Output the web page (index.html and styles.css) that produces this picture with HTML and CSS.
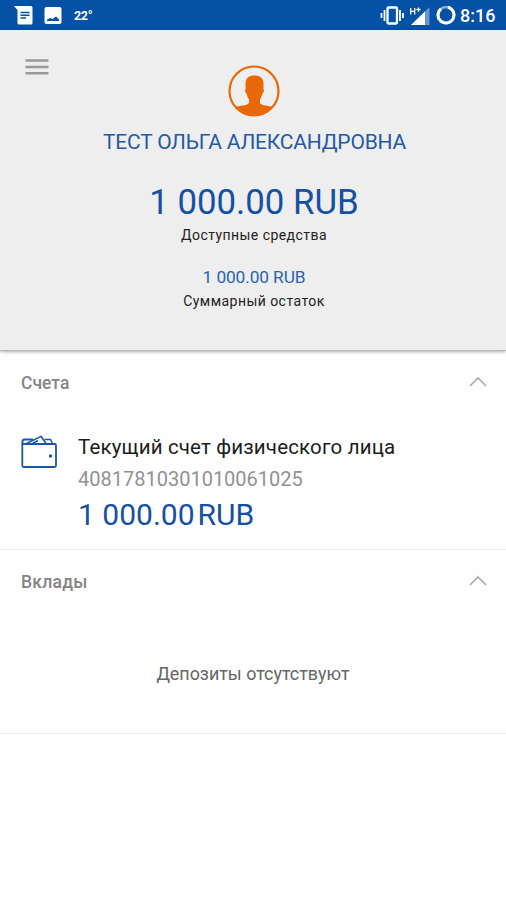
FILE: index.html
```
<!DOCTYPE html>
<html lang="ru">
<head>
<meta charset="utf-8">
<title>Счета</title>
<link rel="stylesheet" href="styles.css">
</head>
<body>
<div class="status">
  <div class="status-left">
    <svg width="64" height="30" viewBox="0 0 64 30">
      <path fill="#fff" d="M14 6H31a1.500 1.500 0 0 1 1.500 1.500V23a1.500 1.500 0 0 1-1.500 1.500H19a1.500 1.500 0 0 1-1.500-1.500V10Z"/>
      <path d="M20.500 12.500H29.500M20.500 15.200H29.500M20.500 18H26" stroke="#0451a5" stroke-width="1.500"/>
      <rect x="44.500" y="7" width="17" height="17" rx="2" fill="#fff"/>
      <path fill="#0451a5" d="M47 21V19.500L50.500 18L52.500 19L56 16.500L59 19.500V21Z"/>
    </svg>
    <span class="temp">22°</span>
  </div>
  <div class="status-right">
    <svg width="78" height="30" viewBox="380 0 78 30">
      <rect x="387.500" y="7.500" width="9.500" height="16" rx="1" fill="none" stroke="#fff" stroke-width="2.300"/>
      <path d="M384.500 10V21M381.500 13V18M400 10V21M403 13V18" stroke="#fff" stroke-width="1.800"/>
      <path fill="#6795cc" d="M429.500 7V25H411Z"/>
      <path fill="#fff" d="M425 11.500V25H411Z"/>
      <path d="M410.700 8V14.500M414.700 8V14.500M410.700 11.300H414.700M416.500 9.500H420.500M418.500 7.500V11.500" stroke="#fff" stroke-width="1.300"/>
      <circle cx="446" cy="15" r="8" fill="none" stroke="#8bafd8" stroke-width="2.500"/>
      <path d="M448 7.300A8 8 0 1 1 441 8.800" fill="none" stroke="#fff" stroke-width="3"/>
    </svg>
    <span class="clock">8:16</span>
  </div>
</div>
<header class="summary">
  <div class="topbar">
    <svg class="menu" width="24" height="18" viewBox="0 0 24 18"><path d="M.5 2.500H23.500M.5 9H23.500M.5 15.200H23.500" stroke="#999" stroke-width="2.500"/></svg>
    <svg class="avatar" width="52" height="52" viewBox="0 0 52 52">
      <circle cx="26" cy="26" r="24.500" fill="none" stroke="#e96807" stroke-width="2.200"/>
      <path fill="#e96807" d="M26.500 10.500C32 10.500 35.500 13 35.500 18.500V24C36.500 25.500 35.500 28 34.300 29C33.700 31.500 33 33 32 34.500V38C34.500 41 40 40.500 45.200 42A25 25 0 0 1 7 42C12 40.500 18.500 41 21 38V34.500C20 33 19.300 31.500 18.700 29C17.300 28 16.500 25.500 17.500 24V18.500C17.500 13 21 10.500 26.500 10.500Z"/>
    </svg>
  </div>
  <div class="name">ТЕСТ ОЛЬГА АЛЕКСАНДРОВНА</div>
  <div class="available">1 000.00 RUB</div>
  <div class="caption">Доступные средства</div>
  <div class="total">1 000.00 RUB</div>
  <div class="caption caption-total">Суммарный остаток</div>
</header>
<main>
  <section class="accounts">
    <div class="section-head">
      <h2>Счета</h2>
      <svg width="18" height="12" viewBox="0 0 18 12"><path d="M1 10L9 2L17 10" fill="none" stroke="#aaa" stroke-width="1.600"/></svg>
    </div>
    <div class="account">
      <svg class="wallet" width="38" height="36" viewBox="20 435 38 36" fill="none" stroke="#1c56a6" stroke-width="1.800" stroke-linejoin="round">
        <path d="M22.300 443V466.500Q22.300 468 24 468H54.500Q56 468 56 466.500V446.500Q56 445 54.500 445H24.500Q22.300 445 22.300 443Q22.300 440.500 25 440.500H33"/>
        <path d="M26.500 444.500L41 437.300L46 444.500M32.500 444.500L38 441.500M44.500 440.500H50.500L52.500 444.500" stroke-width="1.500"/>
        <circle cx="50.500" cy="457" r="1.700" fill="#1c56a6" stroke="none"/>
      </svg>
      <div class="details">
        <div class="title">Текущий счет физического лица</div>
        <div class="number">40817810301010061025</div>
        <div class="amount"><span>1 000.00</span><span>RUB</span></div>
      </div>
    </div>
  </section>
  <section class="deposits">
    <div class="section-head">
      <h2 class="t-deposits">Вклады</h2>
      <svg width="18" height="12" viewBox="0 0 18 12"><path d="M1 10L9 2L17 10" fill="none" stroke="#aaa" stroke-width="1.600"/></svg>
    </div>
    <div class="empty">Депозиты отсутствуют</div>
  </section>
</main>
</body>
</html>
```
FILE: styles.css
```
* { box-sizing: border-box; }
body {
  margin: 0;
  height: 900px;
  background: #fefefe;
  font-family: Roboto, "Liberation Sans", sans-serif;
  white-space: nowrap;
  overflow: hidden;
}
svg { display: block; flex: none; }
.status {
  display: flex;
  justify-content: space-between;
  height: 30px;
  background: #0451a5;
  color: #fff;
  line-height: 30px;
}
.status-left, .status-right { display: flex; }
.temp { margin-left: 10px; font-size: 12.5px; font-weight: 700; line-height: 32px; letter-spacing: -.3px; }
.status-right { width: 126px; }
.clock { margin-left: 2px; font-size: 18px; font-weight: 500; line-height: 32px; }
.summary {
  height: 321px;
  background: #eee;
  text-align: center;
  border-bottom: 1px solid #b8b8b8;
  box-shadow: 0 1px 3px rgba(0, 0, 0, .3);
}
.topbar { display: grid; grid-template-columns: 228px 1fr; height: 98px; }
.menu { margin: 28px 0 0 25px; }
.avatar { margin-top: 35px; }
.name { height: 28px; line-height: 29px; font-size: 21px; letter-spacing: -.2px; color: #2359a5; padding-left: 3px; }
.available { height: 44px; margin-top: 24px; line-height: 44px; font-size: 34.8px; color: #1450a3; padding-left: 2px; }
.caption { height: 20px; margin-top: 1px; line-height: 20px; font-size: 14px; letter-spacing: .45px; color: #222; padding-left: 2px; }
.total { height: 24px; margin-top: 20px; line-height: 24px; font-size: 17.3px; letter-spacing: -.1px; color: #2864b0; padding-left: 2px; }
.caption-total { margin-top: 2px; }
.accounts { height: 199px; border-bottom: 1px solid #eee; }
.section-head {
  display: flex;
  align-items: center;
  justify-content: space-between;
  height: 62px;
  padding: 0 19px 0 21px;
}
h2 { margin: 0; padding-top: 2px; font-size: 17.5px; font-weight: 500; color: #858585; }
.t-deposits { letter-spacing: .25px; }
.account { display: flex; padding: 21px 0 0 20px; gap: 20px; }
.details { padding-top: 1px; }
.title { height: 25px; line-height: 25px; font-size: 20.5px; letter-spacing: .16px; color: #1c1c1c; }
.number { height: 32px; margin-top: 3px; line-height: 32px; font-size: 20px; color: #929292; }
.amount { display: flex; gap: 3px; height: 40px; line-height: 40px; font-size: 30px; color: #1450a3; }
.deposits { height: 184px; border-bottom: 1px solid #eee; }
.empty { margin-top: 47px; height: 30px; line-height: 30px; text-align: center; font-size: 17.9px; color: #666; }
```
